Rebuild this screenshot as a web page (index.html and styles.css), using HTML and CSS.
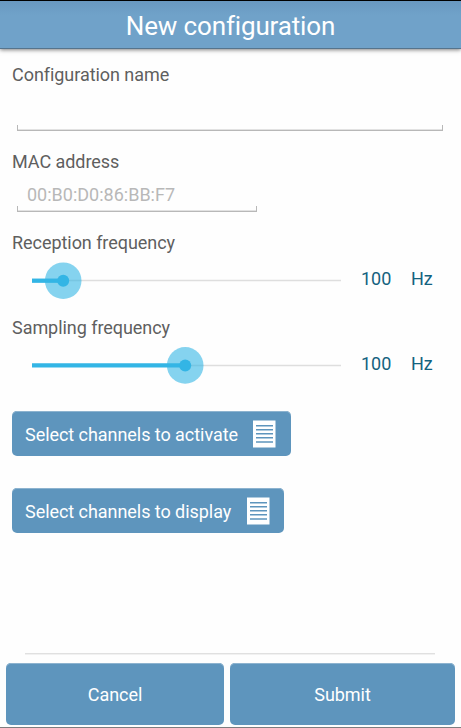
FILE: index.html
```html
<!DOCTYPE html>
<html lang="en">
<head>
<meta charset="utf-8">
<title>New configuration</title>
<link rel="stylesheet" href="styles.css">
</head>
<body>
<header class="header"><h1 class="title">New configuration</h1></header>
<main class="form">
  <section class="field name">
    <div class="label">Configuration name</div>
    <div class="input"></div>
  </section>
  <section class="field mac">
    <div class="label">MAC address</div>
    <div class="input"><span class="hint">00:B0:D0:86:BB:F7</span></div>
  </section>
  <section class="field reception">
    <div class="label">Reception frequency</div>
    <div class="row">
      <svg class="slider" width="330" height="38" viewBox="0 0 330 38"><path d="M20 18.5H329" stroke="#dedede" stroke-width="1.5"/><path d="M20 18.7H51" stroke="#33b5e5" stroke-width="4.3"/><circle cx="51.2" cy="18.7" r="18.3" fill="#33b5e5" fill-opacity=".6"/><circle cx="51.2" cy="18.7" r="6" fill="#33b5e5"/></svg>
      <span class="value">100</span><span class="unit">Hz</span>
    </div>
  </section>
  <section class="field sampling">
    <div class="label">Sampling frequency</div>
    <div class="row">
      <svg class="slider" width="330" height="38" viewBox="0 0 330 38"><path d="M20 18.5H329" stroke="#dedede" stroke-width="1.5"/><path d="M20 18.4H173" stroke="#33b5e5" stroke-width="4.3"/><circle cx="173.2" cy="18.4" r="18.3" fill="#33b5e5" fill-opacity=".6"/><circle cx="173.2" cy="18.4" r="6" fill="#33b5e5"/></svg>
      <span class="value">100</span><span class="unit">Hz</span>
    </div>
  </section>
  <div class="button select activate"><span>Select channels to activate</span>
    <svg width="23" height="28" viewBox="0 0 23 28"><path fill="#fff" d="M0 .5h22.5v27H0z"/><path d="M3 5.8H20M3 9.8H20M3 13.8H20M3 17.8H20M3 22H20" stroke="#5e95bd" stroke-width="1.4"/></svg>
  </div>
  <div class="button select display"><span>Select channels to display</span>
    <svg width="23" height="28" viewBox="0 0 23 28"><path fill="#fff" d="M0 .5h22.5v27H0z"/><path d="M3 5.8H20M3 9.8H20M3 13.8H20M3 17.8H20M3 22H20" stroke="#5e95bd" stroke-width="1.4"/></svg>
  </div>
</main>
<footer class="footer">
  <div class="button cancel"><span>Cancel</span></div>
  <div class="button submit"><span>Submit</span></div>
</footer>
</body>
</html>
```
FILE: styles.css
```css
* { box-sizing: border-box; }
body {
  margin: 0;
  height: 728px;
  overflow: hidden;
  display: flex;
  flex-direction: column;
  background: #fefefe;
  border-bottom: 1px solid #7d7d7f;
  font: 18px/20px Roboto, sans-serif;
  letter-spacing: -0.05px;
  font-variant-ligatures: normal;
  color: #5f5f5f;
}
.header {
  height: 49px;
  flex: none;
  padding-top: 2px;
  display: flex;
  align-items: center;
  justify-content: center;
  background: linear-gradient(#6998c0, #70a2c9 14px);
  border-top: 1px solid #000;
  border-bottom: 1px solid #56748c;
  box-shadow: 0 1px 4px rgba(0, 0, 0, .5);
}
.title { margin: 0; font-size: 26px; line-height: 30px; font-weight: 400; letter-spacing: -0.15px; color: #fff; }
.form { flex: 1; padding: 16px 12px 0; }
.field { display: flex; flex-direction: column; align-items: flex-start; }
.label { height: 20px; white-space: nowrap; }
.input {
  margin-left: 5px;
  height: 40px;
  display: flex;
  flex-direction: column;
  justify-content: space-between;
  padding-top: 13px;
}
.input::after {
  content: "";
  height: 5px;
  border: 1px solid #b8b8b8;
  border-top: 0;
  margin-top: auto;
  box-shadow: inset 0 -1px #e2e2e2;
}
.name { height: 87px; }
.name .input { width: 426px; height: 46px; }
.mac { height: 81px; }
.mac .input { width: 240px; }
.hint { margin-left: 10px; color: #b8b8b8; letter-spacing: 0; white-space: nowrap; }
.reception { height: 85px; }
.sampling { height: 93px; }
.row { display: flex; margin-top: 9px; height: 38px; }
.slider { flex: none; }
.value, .unit { margin-top: 7px; color: #14627f; }
.value { margin-left: 19px; width: 50px; }
.button {
  display: flex;
  align-items: center;
  background: #5e95bd;
  border-radius: 5px;
  box-shadow: inset 0 1px #8db3cf;
  color: #fff;
  white-space: nowrap;
}
.select { height: 45px; padding: 0 15px 0 13px; justify-content: space-between; }
.select span { padding-top: 3px; }
.activate { width: 279px; }
.display { width: 272px; margin-top: 32px; padding-right: 14px; }
.footer {
  flex: none;
  display: flex;
  gap: 6px;
  height: 74px;
  padding: 10px 6px 2px;
  background: linear-gradient(#e0e0e0 1px, #f1f1f1 1px) 25px 0 / 410px 2px no-repeat;
}
.footer .button { justify-content: center; padding-top: 2px; }
.cancel { width: 218px; }
.submit { width: 225px; }
```
